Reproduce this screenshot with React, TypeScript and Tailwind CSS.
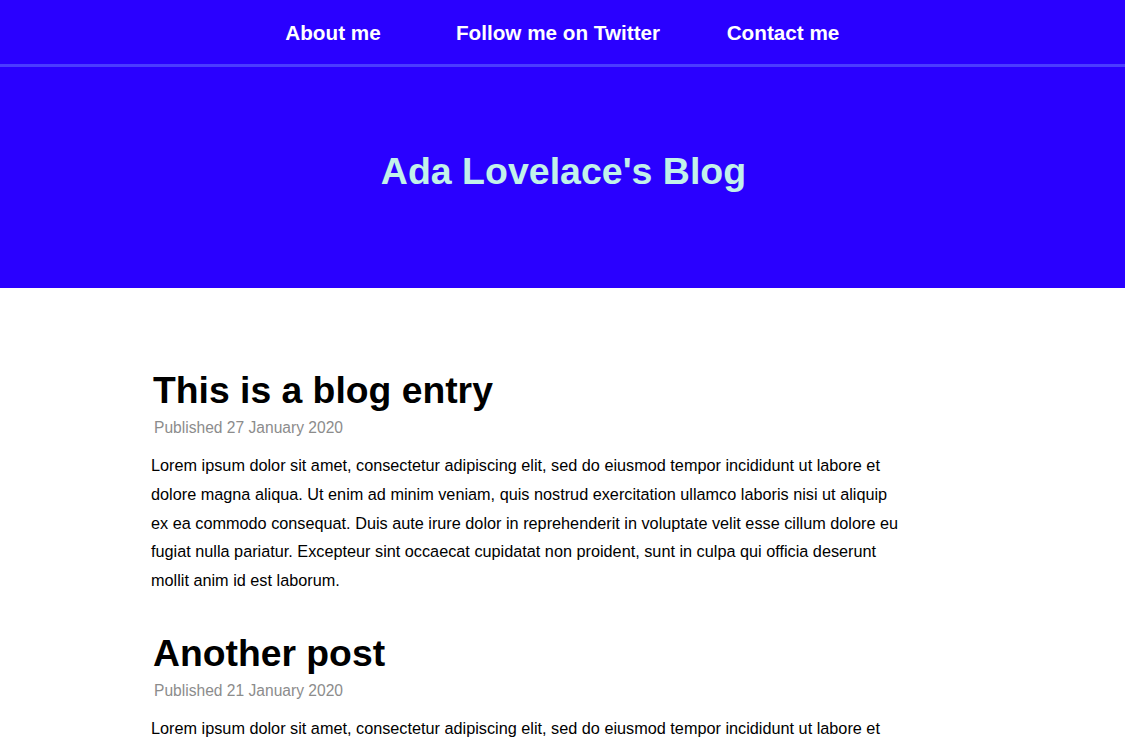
import React from "react";

const lorem =
  "Lorem ipsum dolor sit amet, consectetur adipiscing elit, sed do eiusmod tempor incididunt ut labore et dolore magna aliqua. Ut enim ad minim veniam, quis nostrud exercitation ullamco laboris nisi ut aliquip ex ea commodo consequat. Duis aute irure dolor in reprehenderit in voluptate velit esse cillum dolore eu fugiat nulla pariatur. Excepteur sint occaecat cupidatat non proident, sunt in culpa qui officia deserunt mollit anim id est laborum.";

function Post({ title, date, first }: { title: string; date: string; first?: boolean }) {
  return (
    <article className={first ? "" : "mt-[31px]"}>
      <h1 className="text-[37.3px] font-bold leading-normal text-black pl-[2px]">{title}</h1>
      <p className="-mt-[3px] text-[15.6px] leading-normal text-[#8c8c8c] pl-[3px]">{date}</p>
      <p className="mt-[12px] text-[16.25px] leading-[28.7px] text-black">{lorem}</p>
    </article>
  );
}

export default function App() {
  return (
    <div className="min-h-screen bg-white" style={{ fontFamily: '"Liberation Sans", Helvetica, Arial, sans-serif' }}>
      <header className="bg-[#2a00ff]">
        <nav className="h-[64px] flex justify-center items-center pr-[9px] pt-[1px]">
          <ul className="grid grid-cols-[225px_225px_225px] text-[20.7px] font-bold text-white leading-normal">
            <li className="text-center">About me</li>
            <li className="text-center">Follow me on Twitter</li>
            <li className="text-center">Contact me</li>
          </ul>
        </nav>
        <div className="h-[3px] bg-[#4b3cff]" />
        <div className="h-[221px] pt-[76px] pl-[2px]">
          <h2 className="text-center text-[37.5px] font-bold leading-normal text-[#c2f1ea]">Ada Lovelace's Blog</h2>
        </div>
      </header>
      <main className="ml-[151px] w-[755px] pt-[75px] pb-10">
        <Post first title="This is a blog entry" date="Published 27 January 2020" />
        <Post title="Another post" date="Published 21 January 2020" />
      </main>
    </div>
  );
}
